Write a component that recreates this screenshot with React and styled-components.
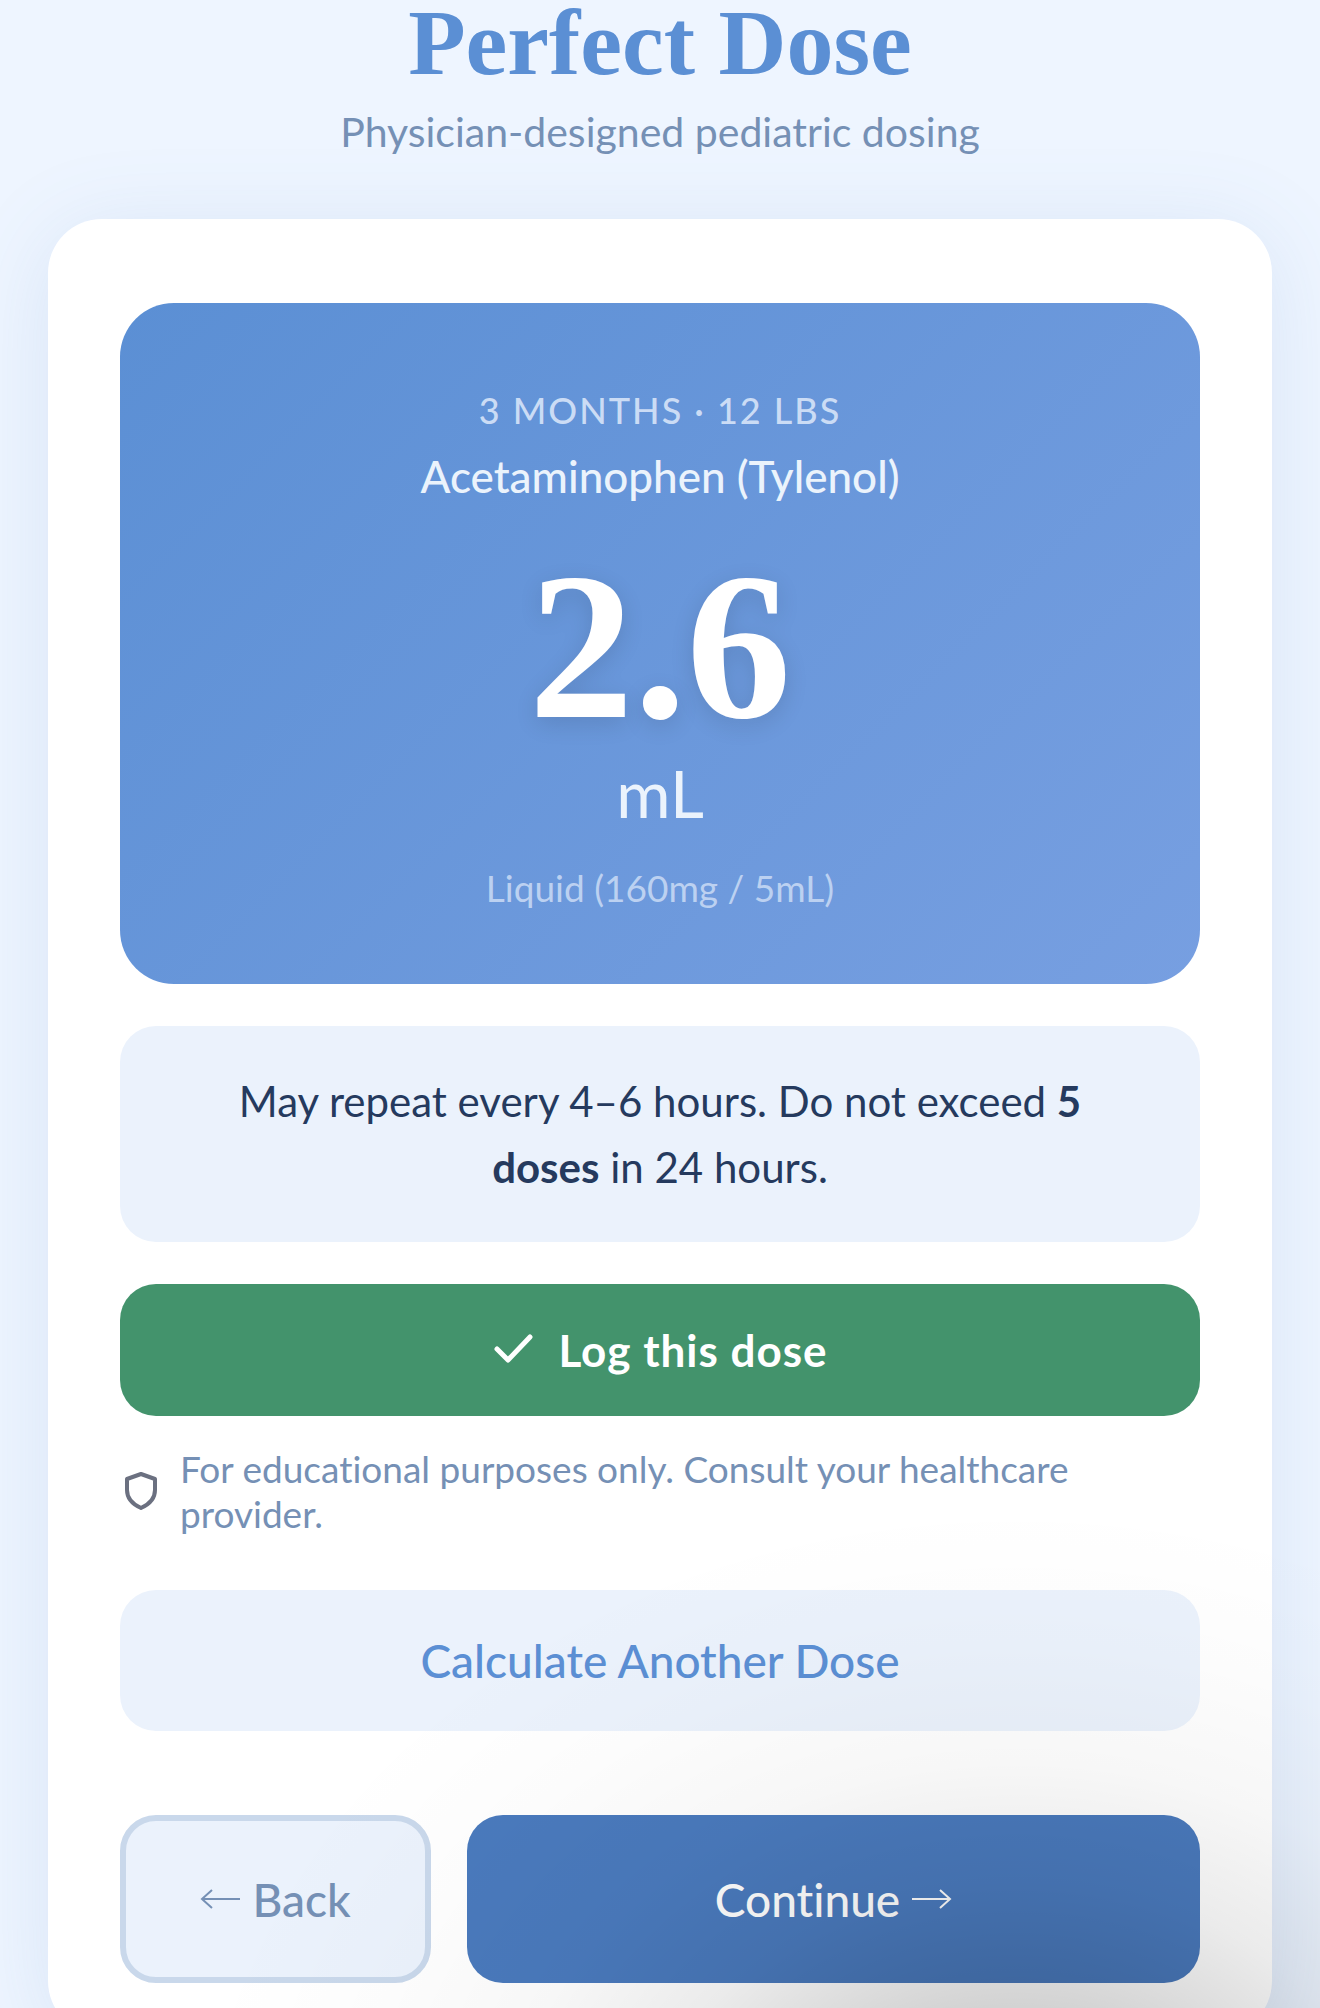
import React from "react";
import styled, { createGlobalStyle } from "styled-components";


const GlobalStyle = createGlobalStyle`
    * {
        box-sizing: border-box;
    }
    body {
        margin: 0;
        background: #eef5ff;
        font-family: "Lato", "Liberation Sans", sans-serif;
        font-variant-ligatures: none;
    }
    button {
        font-family: inherit;
        font-variant-ligatures: none;
        cursor: pointer;
    }
`;
const Page = styled.div`
    position: relative;
    height: 100vh;
    overflow: hidden;
    padding: 0 48px;
`;
const Header = styled.header`
    display: flex;
    flex-direction: column;
    align-items: center;
    padding-bottom: 60px;
`;
const Title = styled.h1`
    margin: 0;
    font-family: "Liberation Serif", serif;
    font-size: 94px;
    font-weight: 700;
    line-height: 84px;
    color: #5b8fd4;
`;
const Subtitle = styled.p`
    margin: 21px 0 0;
    font-size: 41px;
    line-height: 54px;
    color: #7590b5;
`;
const Card = styled.main`
    display: flex;
    flex-direction: column;
    padding: 84px 72px 52px;
    border-radius: 54px;
    background: #fff;
    box-shadow: 0 12px 90px rgba(74, 122, 189, 0.13);
`;
const Result = styled.section`
    display: flex;
    flex-direction: column;
    align-items: center;
    padding: 83px 60px 72px;
    border-radius: 54px;
    background: linear-gradient(135deg, #5b8fd4, #779fe1);
    color: #fff;
`;
const Patient = styled.div`
    font-size: 36px;
    font-weight: 500;
    line-height: 48px;
    letter-spacing: 2px;
    text-transform: uppercase;
    color: #cbdcf5;
`;
const Medicine = styled.div`
    margin-top: 15px;
    font-size: 44px;
    font-weight: 500;
    line-height: 54px;
    color: #ebf3fc;
`;
const Amount = styled.div`
    margin-top: 38px;
    font-family: "Liberation Serif", serif;
    font-size: 210px;
    font-weight: 700;
    line-height: 210px;
    text-shadow: 0 6px 24px rgba(0, 0, 0, 0.12);
`;
const Unit = styled.div`
    font-size: 66px;
    line-height: 84px;
    color: #ebf3fc;
`;
const Form = styled.div`
    margin-top: 29px;
    font-size: 37px;
    line-height: 48px;
    color: #bcd1f1;
`;
const Note = styled.p`
    margin: 42px 0;
    padding: 42px 96px;
    border-radius: 36px;
    background: #ebf2fc;
    font-size: 42px;
    line-height: 66px;
    text-align: center;
    color: #253a5e;
`;
const LogButton = styled.button`
    display: flex;
    align-items: center;
    justify-content: center;
    gap: 24px;
    height: 132px;
    border: 0;
    border-radius: 36px;
    background: #43936c;
    font-size: 44px;
    font-weight: 700;
    letter-spacing: 1px;
    color: #fff;
`;
const Disclaimer = styled.div`
    display: flex;
    align-items: center;
    gap: 18px;
    margin: 30px 0 54px;
`;
const DisclaimerText = styled.p`
    flex: 1;
    margin: 0;
    font-size: 37px;
    line-height: 45px;
    color: #7590b5;
`;
const AgainButton = styled.button`
    height: 141px;
    border: 0;
    border-radius: 36px;
    background: #ebf2fc;
    font-size: 46px;
    font-weight: 500;
    color: #5b8fd4;
`;
const Nav = styled.nav`
    display: flex;
    gap: 36px;
    margin-top: 84px;
`;
const NavButton = styled.button`
    display: flex;
    flex: ${({ $primary }) => ($primary ? "1" : "0 0 311px")};
    align-items: center;
    justify-content: center;
    gap: 12px;
    height: 168px;
    border: ${({ $primary }) => ($primary ? "0" : "6px solid #c9d8eb")};
    border-radius: 36px;
    background: ${({ $primary }) => ($primary ? "#4a7abd" : "#ebf2fc")};
    font-size: 46px;
    font-weight: 500;
    color: ${({ $primary }) => ($primary ? "#fff" : "#7590b5")};
`;
// soft shade in the bottom right corner, lies over the whole card
const Shade = styled.div`
    position: absolute;
    inset: 0;
    pointer-events: none;
    background: radial-gradient(
        ellipse 840px 690px at 77% 109%,
        rgba(0, 0, 0, 0.24),
        rgba(0, 0, 0, 0.18) 25%,
        rgba(0, 0, 0, 0.08) 45%,
        rgba(0, 0, 0, 0.03) 62%,
        rgba(0, 0, 0, 0.01) 80%,
        rgba(0, 0, 0, 0)
    );
`;

const CheckIcon = () => (
    <svg width="42" height="42" viewBox="0 0 42 42" fill="none" stroke="currentColor" strokeWidth="5" strokeLinecap="round" strokeLinejoin="round" aria-hidden="true">
        <path d="M5 20l11 11L38 8" />
    </svg>
);

const ShieldIcon = () => (
    <svg width="42" height="42" viewBox="0 0 42 42" fill="none" stroke="#6b7080" strokeWidth="4" strokeLinejoin="round" aria-hidden="true">
        <path d="M21 4l14 5v11c0 8-5 14-14 18C12 34 7 28 7 20V9z" />
    </svg>
);

const ArrowIcon = ({ left }) => (
    <svg width="40" height="20" viewBox="0 0 40 20" fill="none" stroke="currentColor" strokeWidth="2" aria-hidden="true">
        <path d={left ? "M40 10H2M12 1L2 10l10 9" : "M0 10h38M28 1l10 9-10 9"} />
    </svg>
);


export default function App() {
    return (
        <Page>
            <GlobalStyle />
            <Header>
                <Title>Perfect Dose</Title>
                <Subtitle>Physician-designed pediatric dosing</Subtitle>
            </Header>
            <Card>
                <Result>
                    <Patient>3 months · 12 lbs</Patient>
                    <Medicine>Acetaminophen (Tylenol)</Medicine>
                    <Amount>2.6</Amount>
                    <Unit>mL</Unit>
                    <Form>Liquid (160mg / 5mL)</Form>
                </Result>
                <Note>
                    May repeat every 4–6 hours. Do not exceed <strong>5 doses</strong> in 24 hours.
                </Note>
                <LogButton type="button">
                    <CheckIcon />
                    Log this dose
                </LogButton>
                <Disclaimer>
                    <ShieldIcon />
                    <DisclaimerText>
                        For educational purposes only. Consult your healthcare provider.
                    </DisclaimerText>
                </Disclaimer>
                <AgainButton type="button">Calculate Another Dose</AgainButton>
                <Nav>
                    <NavButton type="button">
                        <ArrowIcon left />
                        Back
                    </NavButton>
                    <NavButton type="button" $primary>
                        Continue
                        <ArrowIcon />
                    </NavButton>
                </Nav>
            </Card>
            <Shade />
        </Page>
    );
}
